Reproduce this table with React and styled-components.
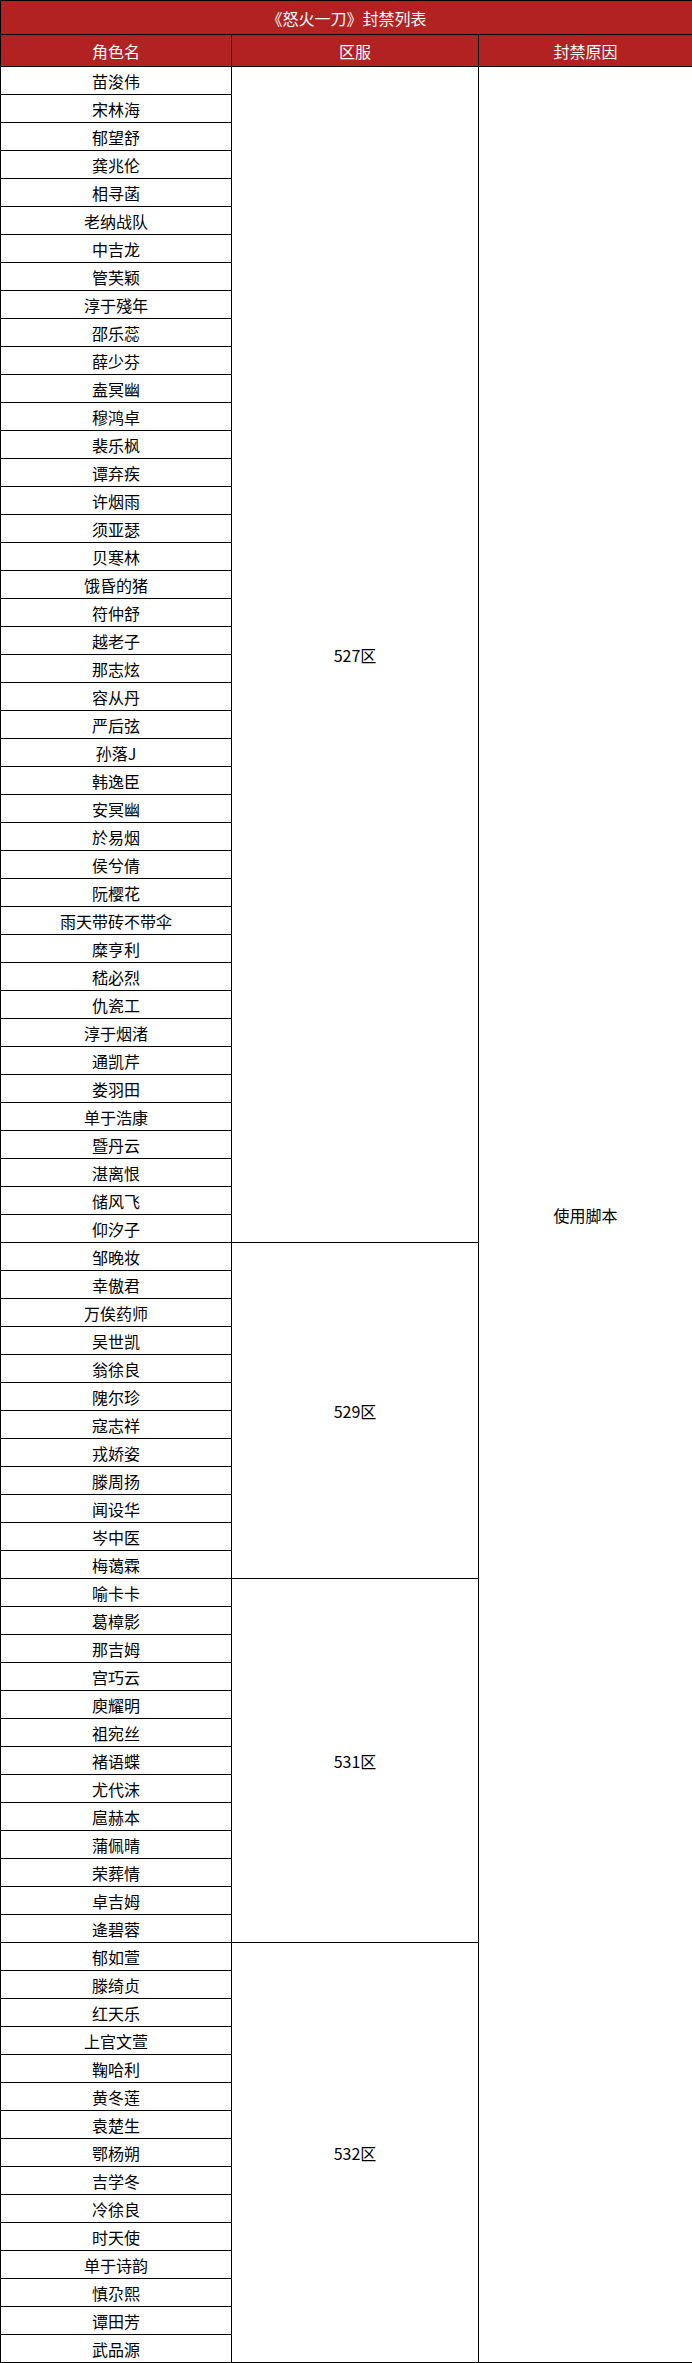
import React from 'react';
import styled, { createGlobalStyle } from 'styled-components';

const groups = [
  {
    server: '527区',
    names: [
      '苗浚伟', '宋林海', '郁望舒', '龚兆伦', '相寻菡', '老纳战队', '中吉龙', '管芙颖',
      '淳于殘年', '邵乐蕊', '薛少芬', '盍冥幽', '穆鸿卓', '裴乐枫', '谭弃疾', '许烟雨',
      '须亚瑟', '贝寒林', '饿昏的猪', '符仲舒', '越老子', '那志炫', '容从丹', '严后弦',
      '孙落J', '韩逸臣', '安冥幽', '於易烟', '侯兮倩', '阮樱花', '雨天带砖不带伞', '糜亨利',
      '嵇必烈', '仇瓷工', '淳于烟渚', '通凯芹', '娄羽田', '单于浩康', '暨丹云', '湛离恨',
      '储风飞', '仰汐子',
    ],
  },
  {
    server: '529区',
    names: [
      '邹晚妆', '幸傲君', '万俟药师', '吴世凯', '翁徐良', '隗尔珍', '寇志祥', '戎娇姿',
      '滕周扬', '闻设华', '岑中医', '梅蔼霖',
    ],
  },
  {
    server: '531区',
    names: [
      '喻卡卡', '葛樟影', '那吉姆', '宫巧云', '庾耀明', '祖宛丝', '褚语蝶', '尤代沫',
      '扈赫本', '蒲佩晴', '荣葬情', '卓吉姆', '逄碧蓉',
    ],
  },
  {
    server: '532区',
    names: [
      '郁如萱', '滕绮贞', '红天乐', '上官文萱', '鞠哈利', '黄冬莲', '袁楚生', '鄂杨朔',
      '吉学冬', '冷徐良', '时天使', '单于诗韵', '慎尕熙', '谭田芳', '武品源',
    ],
  },
];

const total = groups.reduce((n, g) => n + g.names.length, 0);

const GlobalStyle = createGlobalStyle`
  html, body {
    margin: 0;
    padding: 0;
    background: #fff;
  }
  body {
    font-family: 'Noto Sans CJK SC', 'Liberation Sans', sans-serif;
  }
`;

const Table = styled.table`
  width: 692px;
  border-collapse: collapse;
  table-layout: fixed;
  font-size: 16px;
  color: #000;
`;

const TitleCell = styled.th`
  height: 33px;
  padding: 0;
  background: #b22222;
  color: #fff;
  font-weight: normal;
  font-size: 16px;
  line-height: 20px;
  border: 1px solid #000;
  text-align: center;
  vertical-align: middle;
`;

const HeadCell = styled.th`
  height: 31px;
  padding: 0;
  background: #b22222;
  color: #fff;
  font-weight: normal;
  font-size: 16px;
  line-height: 20px;
  border: 1px solid #000;
  text-align: center;
  vertical-align: middle;
`;

const Cell = styled.td`
  height: 27px;
  padding: 0;
  line-height: 20px;
  border: 1px solid #000;
  text-align: center;
  vertical-align: middle;
  white-space: nowrap;
`;

export default function App() {
  return (
    <>
      <GlobalStyle />
      <Table>
        <colgroup>
          <col style={{ width: 231 }} />
          <col style={{ width: 247 }} />
          <col style={{ width: 214 }} />
        </colgroup>
        <thead>
          <tr>
            <TitleCell colSpan={3}>《怒火一刀》封禁列表</TitleCell>
          </tr>
          <tr>
            <HeadCell>角色名</HeadCell>
            <HeadCell>区服</HeadCell>
            <HeadCell>封禁原因</HeadCell>
          </tr>
        </thead>
        <tbody>
          {groups.map((g, gi) =>
            g.names.map((name, i) => (
              <tr key={g.server + name}>
                <Cell>{name}</Cell>
                {i === 0 && <Cell rowSpan={g.names.length}>{g.server}</Cell>}
                {gi === 0 && i === 0 && <Cell rowSpan={total}>使用脚本</Cell>}
              </tr>
            ))
          )}
        </tbody>
      </Table>
    </>
  );
}
